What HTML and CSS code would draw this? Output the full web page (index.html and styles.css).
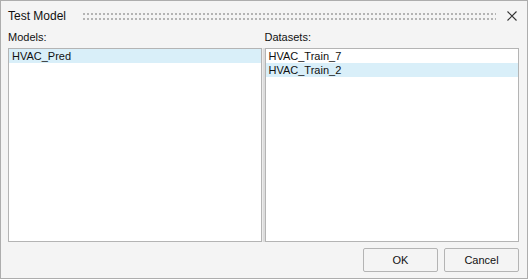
FILE: index.html
```html
<!DOCTYPE html>
<html lang="en">
<head>
    <meta charset="UTF-8">
    <title>Test Model</title>
    <link rel="stylesheet" href="styles.css">
</head>
<body>
    <div class="dialog">
        <div class="titlebar">
            <span class="title">Test Model</span>
            <span class="grip"></span>
            <svg class="close" width="10" height="10" viewBox="0 0 10 10">
                <path d="M0.5 0.5 L9.5 9.5 M9.5 0.5 L0.5 9.5" stroke="#333" stroke-width="1.1" fill="none"/>
            </svg>
        </div>
        <div class="panes">
            <div class="pane">
                <label class="pane-label">Models:</label>
                <ul class="list">
                    <li class="selected">HVAC_Pred</li>
                </ul>
            </div>
            <div class="splitter"></div>
            <div class="pane">
                <label class="pane-label">Datasets:</label>
                <ul class="list">
                    <li>HVAC_Train_7</li>
                    <li class="selected">HVAC_Train_2</li>
                </ul>
            </div>
        </div>
        <div class="buttons">
            <button type="button">OK</button>
            <button type="button">Cancel</button>
        </div>
    </div>
</body>
</html>
```

FILE: styles.css
```css
body {
    margin: 0;
    font-family: "Liberation Sans", Arial, sans-serif;
    color: #111;
}
.dialog {
    width: 528px;
    height: 279px;
    box-sizing: border-box;
    border: 1px solid #adadad;
    background-color: #f4f4f4;
    display: flex;
    flex-direction: column;
}
.titlebar {
    display: flex;
    align-items: center;
    height: 28px;
    padding: 2px 10px 0 7px;
    box-sizing: border-box;
}
.title {
    font-size: 12px;
    color: #111;
}
.grip {
    flex: 1;
    height: 7px;
    margin: 0 11px 0 17px;
    background-image: linear-gradient(90deg, #b4b4b4 2px, transparent 2px),
                      linear-gradient(90deg, #b4b4b4 2px, transparent 2px);
    background-size: 4px 2px, 4px 2px;
    background-position: 0 0, 0 5px;
    background-repeat: repeat-x;
}
.close {
    display: block;
}
.panes {
    display: flex;
    height: 213px;
    padding: 0 8px 0 7px;
}
.pane {
    display: flex;
    flex-direction: column;
    width: 254px;
}
.pane:last-child {
    width: 255px;
}
.pane-label {
    font-size: 11px;
    height: 19px;
    line-height: 14px;
    padding-top: 1px;
    box-sizing: border-box;
}
.splitter {
    width: 3px;
    margin-top: 19px;
    background-color: #dcdcdc;
    border-left: 1px solid #ececec;
    box-sizing: border-box;
}
.list {
    flex: 1;
    list-style: none;
    margin: 0;
    padding: 0;
    background: white;
    border: 1px solid #b4b4b4;
}
.list li {
    font-size: 11px;
    height: 14px;
    line-height: 14px;
    padding-left: 3px;
}
.list li.selected {
    background-color: #d9eff9;
}
.buttons {
    display: flex;
    justify-content: flex-end;
    gap: 6px;
    padding: 6px 8px 0 0;
}
button {
    width: 75px;
    height: 24px;
    font-family: "Liberation Sans", Arial, sans-serif;
    font-size: 11px;
    color: #111;
    background-color: #f4f4f4;
    border: 1px solid #b4b4b4;
    border-radius: 2px;
    padding: 0;
}
```
